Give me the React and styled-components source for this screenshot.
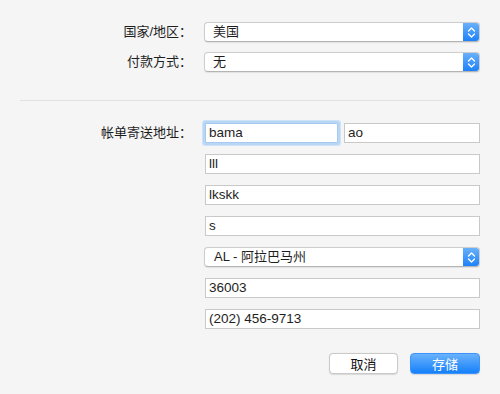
import styled, { createGlobalStyle } from 'styled-components';

const GlobalStyle = createGlobalStyle`
  html, body {
    margin: 0;
    padding: 0;
    background: #f5f5f5;
  }
  body {
    font-family: "Liberation Sans", "Noto Sans CJK SC", sans-serif;
    font-size: 13px;
    color: #1e1e1e;
  }
`;

const Page = styled.div`
  width: 500px;
  height: 394px;
  box-sizing: border-box;
  padding: 22px 20px 0;
  background: #f5f5f5;
`;

const Grid = styled.div`
  display: grid;
  grid-template-columns: 172px 276px;
  column-gap: 12px;
  row-gap: 10px;
  align-items: start;
`;

const Label = styled.div`
  height: 20px;
  line-height: 20px;
  text-align: right;
  white-space: nowrap;
  margin-top: ${(p) => p.$top || 0}px;
`;

const Stack = styled.div`
  display: flex;
  flex-direction: column;
  gap: 11px;
  padding-top: 1px;
`;

const Row = styled.div`
  display: flex;
  gap: 5px;
`;

const Divider = styled.hr`
  border: 0;
  border-top: 1px solid #e1e1e1;
  margin: 28px 0 21px;
`;

const Popup = styled.div`
  position: relative;
  height: 20px;
  box-sizing: border-box;
  border-radius: 4px;
  background: #fff;
  border: 1px solid #cdcdcd;
  border-bottom-color: #b4b4b4;
  box-shadow: 0 0.5px 1px rgba(0, 0, 0, 0.08);
  display: flex;
  align-items: center;
  padding-left: ${(p) => p.$indent || 8}px;
  line-height: 18px;
  overflow: hidden;
`;

const Arrow = styled.span`
  position: absolute;
  top: -1px;
  right: -1px;
  bottom: -1px;
  width: 17px;
  border-radius: 0 4px 4px 0;
  background: linear-gradient(#6db3fa, #1a7ff9);
  display: flex;
  align-items: center;
  justify-content: center;
`;

const Field = styled.div`
  height: 20px;
  box-sizing: border-box;
  margin-left: 1px;
  width: ${(p) => (p.$w ? `${p.$w}px` : 'auto')};
  flex: ${(p) => (p.$w ? 'none' : '1')};
  background: #fff;
  border: 1px solid ${(p) => (p.$focus ? '#a8c9ee' : '#c9c9c9')};
  padding-left: 3px;
  font-size: 13.5px;
  line-height: 18px;
  box-shadow: ${(p) => (p.$focus ? '0 0 0 2px #b8d7f6, 0 0 0 3px #cfe3f8' : 'none')};
  border-radius: ${(p) => (p.$focus ? '1px' : '0')};
`;

const Footer = styled.div`
  display: flex;
  justify-content: flex-end;
  gap: 12px;
  margin-top: 24px;
`;

const Button = styled.button`
  width: ${(p) => p.$w}px;
  height: 21px;
  box-sizing: border-box;
  border-radius: 4px;
  font: inherit;
  font-size: 13px;
  padding: 0;
  border: 1px solid ${(p) => (p.$primary ? '#3b93fb' : '#c9c9c9')};
  background: ${(p) => (p.$primary ? 'linear-gradient(#6ab2fb, #1580fb)' : '#fff')};
  color: ${(p) => (p.$primary ? '#fff' : '#111')};
  box-shadow: 0 0.5px 1px rgba(0, 0, 0, 0.12);
`;

const Chevrons = () => (
  <svg width="9" height="13" viewBox="0 0 9 13">
    <path d="M1.5 5 L4.5 2 L7.5 5 M1.5 8 L4.5 11 L7.5 8" fill="none" stroke="#fff" strokeWidth="1.3" strokeLinecap="round" strokeLinejoin="round" />
  </svg>
);

const Select = ({ children, indent }) => (
  <Popup $indent={indent}>
    {children}
    <Arrow>
      <Chevrons />
    </Arrow>
  </Popup>
);

export default function App() {
  return (
    <Page>
      <GlobalStyle />
      <Grid>
        <Label>国家/地区：</Label>
        <Select>美国</Select>
        <Label>付款方式：</Label>
        <Select>无</Select>
      </Grid>
      <Divider />
      <Grid>
        <Label $top={1}>帐单寄送地址：</Label>
        <Stack>
          <Row>
            <Field $w={133} $focus>bama</Field>
            <Field>ao</Field>
          </Row>
          <Field>lll</Field>
          <Field>lkskk</Field>
          <Field>s</Field>
          <Select indent={9}>AL - 阿拉巴马州</Select>
          <Field>36003</Field>
          <Field>(202) 456-9713</Field>
        </Stack>
      </Grid>
      <Footer>
        <Button $w={69}>取消</Button>
        <Button $w={70} $primary>存储</Button>
      </Footer>
    </Page>
  );
}
